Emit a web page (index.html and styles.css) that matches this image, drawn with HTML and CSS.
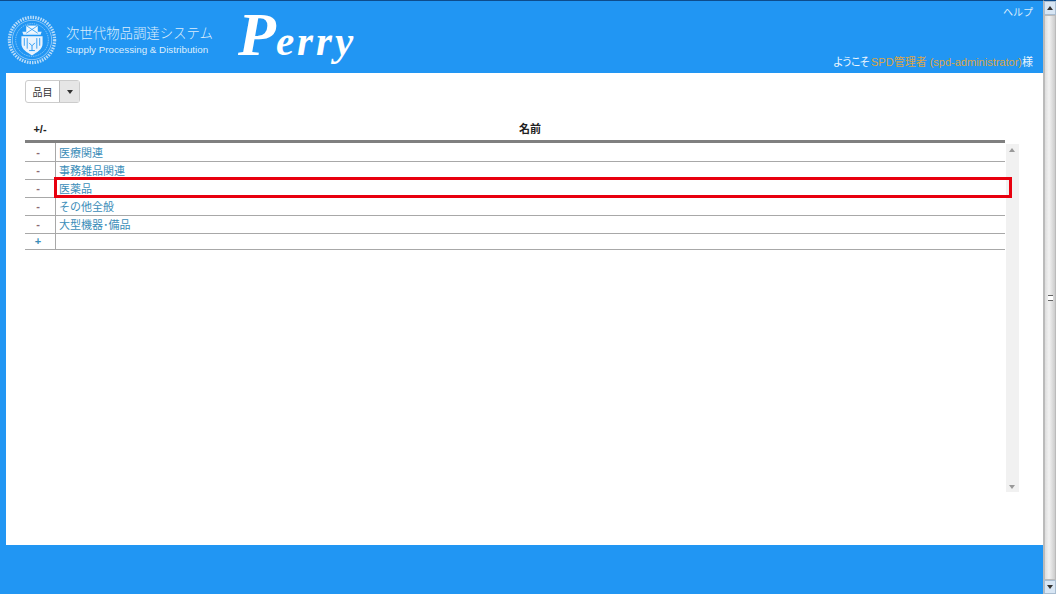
FILE: index.html
```html
<!DOCTYPE html>
<html lang="ja">
<head>
<meta charset="utf-8">
<title>Perry</title>
<link rel="stylesheet" href="styles.css">
</head>
<body>
<div class="window">
  <div class="page">
    <header class="header">
      <svg class="seal" width="50" height="50" viewBox="0 0 52 52" aria-hidden="true">
        <circle cx="26" cy="26" r="23.5" fill="none" stroke="#b9dcf9" stroke-width="3.4" stroke-dasharray="1.6 1.1"/>
        <circle cx="26" cy="26" r="20.5" fill="none" stroke="#cfe7fb" stroke-width=".6"/>
        <circle cx="26" cy="26" r="17" fill="none" stroke="#b9dcf9" stroke-width=".7" stroke-dasharray="1.4 1"/>
        <path d="M16 17.5h20l-1 3H17z" fill="#e3f1fd"/>
        <path d="M20 11h12v8H20z" fill="#eef7fe"/>
        <path d="M20 11l6 4 6-4M20 19l6-4 6 4" fill="none" stroke="#2196f3" stroke-width=".8"/>
        <path d="M15 22h22v8c0 6-6 9-11 12-5-3-11-6-11-12z" fill="#e8f3fd"/>
        <path d="M18 24v8M21 24v11M31 24v11M34 24v8" stroke="#2196f3" stroke-width=".9"/>
        <path d="M23 29l3 3 3-3M26 32v5M23 37h6" fill="none" stroke="#2196f3" stroke-width="1"/>
      </svg>
      <div class="brand">
        <div class="brand-jp">次世代物品調達システム</div>
        <div class="brand-en">Supply Processing &amp; Distribution</div>
      </div>
      <div class="logo"><span class="logo-cap">P</span>erry</div>
      <div class="header-right">
        <a class="help">ヘルプ</a>
        <div class="welcome"><span class="greeting">ようこそ</span> <span class="user">SPD管理者 (spd-administrator)</span>様</div>
      </div>
    </header>
    <main class="main">
      <div class="dropdown">
        <span class="dropdown-label">品目</span>
        <span class="dropdown-toggle"><i class="caret"></i></span>
      </div>
      <div class="grid">
        <div class="grid-head">
          <div class="col-a">+/-</div>
          <div class="col-b">名前</div>
        </div>
        <div class="grid-body">
          <div class="rows">
            <div class="row"><div class="col-a cell minus">-</div><div class="col-b cell">医療関連</div></div>
            <div class="row"><div class="col-a cell minus">-</div><div class="col-b cell">事務雑品関連</div></div>
            <div class="row"><div class="col-a cell minus">-</div><div class="col-b cell">医薬品</div></div>
            <div class="row"><div class="col-a cell minus">-</div><div class="col-b cell">その他全般</div></div>
            <div class="row"><div class="col-a cell minus">-</div><div class="col-b cell">大型機器･備品</div></div>
            <div class="row row-add"><div class="col-a cell plus">+</div><div class="col-b cell"></div></div>
          </div>
          <div class="inner-scroll"><i class="tri-up"></i><i class="tri-down"></i></div>
          <div class="highlight"></div>
        </div>
      </div>
    </main>
    <footer class="footer"></footer>
  </div>
  <div class="scrollbar">
    <div class="sb-btn"><i class="sb-up"></i></div>
    <div class="sb-thumb"><span class="grip"></span></div>
    <div class="sb-btn sb-btn-down"><i class="sb-down"></i></div>
  </div>
</div>
</body>
</html>
```
FILE: styles.css
```css
* { box-sizing: border-box; }
html, body { margin: 0; height: 100%; overflow: hidden; }
body { font-family: "Liberation Sans", "Noto Sans CJK JP", sans-serif; background: #fff; }
.window { display: flex; width: 1056px; height: 594px; }
.page { width: 1043px; display: flex; flex-direction: column; }

.header { height: 73px; flex: none; background: #2196f3; border-top: 1px solid #0d4c8c; display: flex; align-items: flex-start; color: #fff; }
.seal { margin: 14px 0 0 7px; flex: none; }
.brand { margin: 21px 0 0 9px; width: 172px; color: #dcedfc; }
.brand-jp { font-family: "Noto Sans CJK JP", sans-serif; font-weight: 300; font-size: 13.4px; line-height: 20px; white-space: nowrap; }
.brand-en { font-family: "Liberation Sans", sans-serif; font-size: 9.8px; line-height: 12px; margin-top: 2px; white-space: nowrap; }
.logo { font-family: "Liberation Serif", serif; font-style: italic; font-weight: 700; font-size: 41px; line-height: 60px; margin: 3px 0 0 0; color: #fff; letter-spacing: 3px; white-space: nowrap; }
.logo-cap { font-size: 62px; font-weight: 700; letter-spacing: 0; }
.header-right { margin-left: auto; height: 72px; display: flex; flex-direction: column; justify-content: space-between; align-items: flex-end; padding: 5px 10px 4px 0; font-size: 11px; }
.help { color: #d9ecfc; line-height: 14px; font-size: 10px; }
.welcome { line-height: 14px; white-space: nowrap; color: #eef7fe; }
.greeting { letter-spacing: -2.2px; }
.user { color: #d9a548; }

.main { flex: 1; border-left: 6px solid #2196f3; padding: 7px 38px 0 19px; min-height: 0; }
.dropdown { display: inline-flex; vertical-align: top; width: 55px; height: 23px; border: 1px solid #ccc; border-radius: 3px; font-size: 10px; color: #333; font-family: "Noto Sans CJK JP", sans-serif; }
.dropdown-label { width: 33px; display: flex; align-items: center; justify-content: center; }
.dropdown-toggle { flex: 1; background: #e6e6e6; border-left: 1px solid #bbb; display: flex; align-items: center; justify-content: center; }
.caret { border-top: 4px solid #333; border-left: 3.5px solid transparent; border-right: 3.5px solid transparent; }

.grid { margin-top: 17px; width: 980px; }
.grid-head { display: flex; height: 20px; border-bottom: 3px solid #808080; box-sizing: content-box; font-weight: 700; font-size: 11px; color: #222; line-height: 18px; text-align: center; }
.col-a { width: 30px; flex: none; }
.col-b { flex: 1; }
.grid-body { position: relative; height: 349px; }
.rows { width: 980px; }
.row { display: flex; height: 18px; border-bottom: 1px solid #a8a8a8; }
.row:first-child { height: 19px; }
.row-add { height: 16px; }
.cell { font-size: 11px; line-height: 16px; color: #3b8db8; }
.row:first-child .cell { line-height: 18px; }
.row-add .cell { line-height: 14px; }
.col-a.cell { border-right: 1px solid #a8a8a8; text-align: center; width: 31px; font-weight: 700; padding-right: 4px; }
.col-b.cell { padding-left: 3px; font-family: "Noto Sans CJK JP", sans-serif; font-size: 11px; }
.minus { color: #8c6a72; }
.plus { color: #3b8db8; }
.inner-scroll { position: absolute; left: 981px; top: 1px; width: 13px; height: 348px; background: #f1f1f1; }
.tri-up, .tri-down { position: absolute; left: 3px; border-left: 3.5px solid transparent; border-right: 3.5px solid transparent; }
.tri-up { top: 4px; border-bottom: 4px solid #999; }
.tri-down { bottom: 3px; border-top: 4px solid #999; }
.highlight { position: absolute; left: 29px; top: 34px; width: 958px; height: 21px; border: 3px solid #e8000e; }

.footer { height: 49px; flex: none; background: #2196f3; }

.scrollbar { width: 13px; flex: none; background: #e6e6e6; display: flex; flex-direction: column; border-left: 1px solid #bbb; border-top: 1px solid #0d4c8c; }
.sb-btn { height: 14px; flex: none; background: #d8e6f4; border: 1px solid #a9bdd1; display: flex; align-items: center; justify-content: center; }
.sb-up { border-left: 3px solid transparent; border-right: 3px solid transparent; border-bottom: 4px solid #333; }
.sb-down { border-left: 3px solid transparent; border-right: 3px solid transparent; border-top: 4px solid #333; }
.sb-thumb { flex: 1; background: linear-gradient(90deg, #ddd, #f2f2f2 40%, #ccc); border: 1px solid #bbb; display: flex; align-items: center; justify-content: center; }
.grip { width: 5px; height: 6px; border-top: 1px solid #666; border-bottom: 1px solid #666; background: linear-gradient(#fff 40%, #666 40%, #666 60%, #fff 60%); }
```
